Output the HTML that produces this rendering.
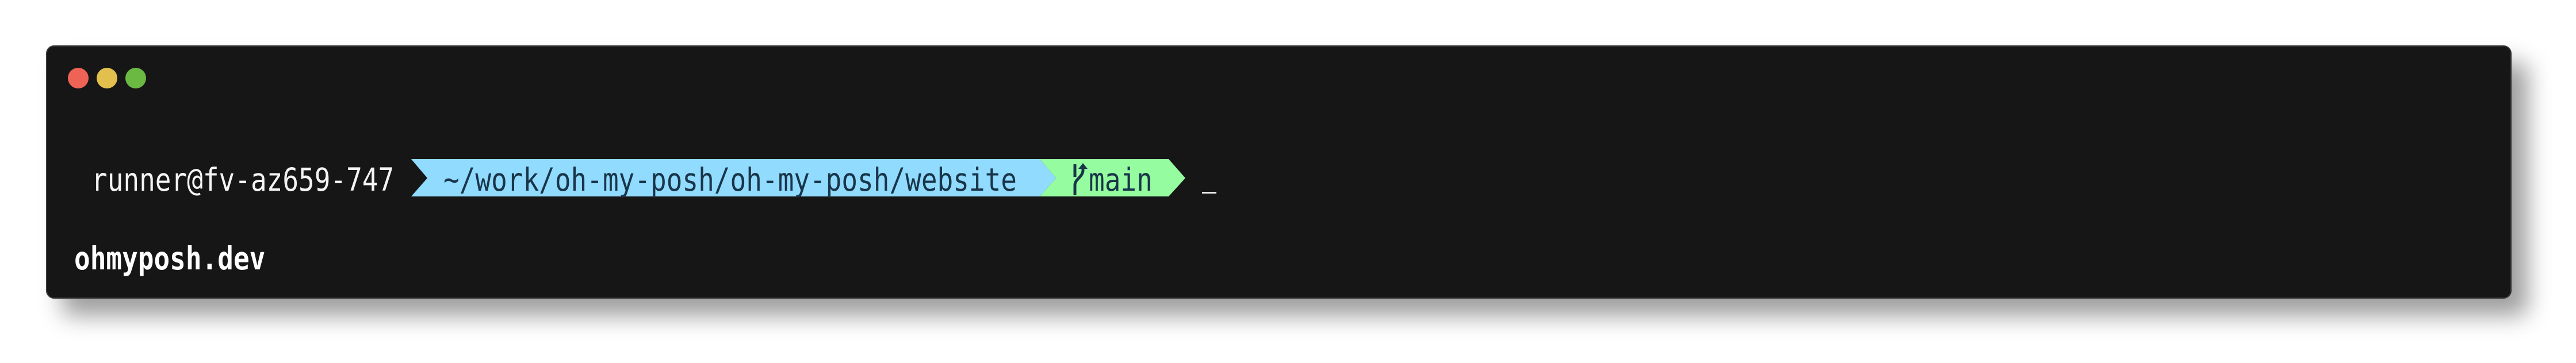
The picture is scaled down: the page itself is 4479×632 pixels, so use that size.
<!DOCTYPE html>
<html><head><meta charset="utf-8"><style>
html,body{margin:0;padding:0;background:#fff;width:4479px;height:632px;overflow:hidden;position:relative}
.win{position:absolute;left:80px;top:79px;width:4287px;height:441px;background:#161616;border-radius:14px;box-shadow:28px 30px 40px rgba(0,0,0,0.38);border:2px solid #3a3a3a;box-sizing:border-box}
.dot{position:absolute;top:118px;width:36px;height:36px;border-radius:50%}
.t{position:absolute;font-family:"DejaVu Sans Mono","Liberation Mono",monospace;font-size:46px;line-height:65px;height:65px;white-space:pre;transform:scaleY(1.2);transform-origin:0 48px}
</style></head><body>
<div class="win"></div>
<div class="dot" style="left:118px;background:#ee6355"></div>
<div class="dot" style="left:168px;background:#e3c04d"></div>
<div class="dot" style="left:218px;background:#6bb943"></div>
<svg style="position:absolute;left:0;top:0" width="4479" height="632">
<polygon points="715,277 1808,277 1836,310 1808,342 715,342 743,310" fill="#91dbff"/>
<polygon points="1808,277 2032,277 2061,310 2032,342 1808,342 1836,310" fill="#95fc9f"/>
<g fill="none" stroke="#193549" stroke-width="5">
<line x1="1869" y1="286" x2="1869" y2="308"/>
<path d="M1869 340 V322 C1869 312 1883 308 1883 296 V292"/>
</g>
<polygon points="1883,284 1891,294 1875,294" fill="#193549"/>
<rect x="2090" y="334" width="25" height="3" fill="#e8e8e8"/>
</svg>
<div class="t" style="left:159px;top:284px;color:#f4f4f4">runner@fv-az659-747</div>
<div class="t" style="left:771px;top:284px;color:#193549">~/work/oh-my-posh/oh-my-posh/website</div>
<div class="t" style="left:1893px;top:284px;color:#193549">main</div>
<div class="t" style="left:129px;top:421px;color:#fff;font-weight:bold">ohmyposh.dev</div>
</body></html>
